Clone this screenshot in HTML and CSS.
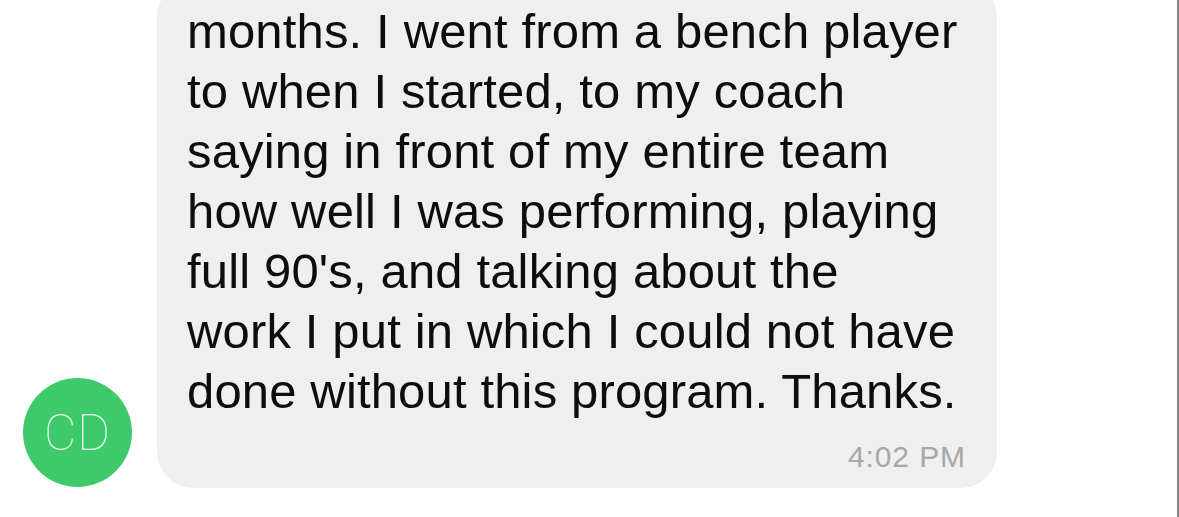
FILE: index.html
```html
<!DOCTYPE html>
<html>
<head>
<meta charset="utf-8">
<link rel="stylesheet" href="styles.css">
</head>
<body>
<div class="thread">
  <div class="row">
    <div class="avatar">CD</div>
    <div class="bubble">
      <p class="text">months. I went from a bench player<br>to when I started, to my coach<br>saying in front of my entire team<br>how well I was performing, playing<br>full 90's, and talking about the<br>work I put in which I could not have<br>done without this program. Thanks.</p>
      <div class="time">4:02 PM</div>
    </div>
  </div>
</div>
</body>
</html>
```
FILE: styles.css
```css
html, body {
  margin: 0;
  padding: 0;
  background: #ffffff;
}
.thread {
  box-sizing: border-box;
  width: 1179px;
  height: 517px;
  overflow: hidden;
  border-right: 2px solid #858585;
  display: flex;
  flex-direction: column;
  justify-content: flex-end;
  padding: 0 0 29px 23px;
}
.row {
  display: flex;
  align-items: flex-end;
  gap: 25px;
}
.avatar {
  flex: none;
  width: 109px;
  height: 109px;
  margin-bottom: 1px;
  border-radius: 50%;
  background: #3ec96b;
  color: #e6f7ea;
  font-family: Roboto, "Liberation Sans", sans-serif;
  font-weight: 100;
  font-size: 50px;
  letter-spacing: 1px;
  display: flex;
  align-items: center;
  justify-content: center;
}
.bubble {
  box-sizing: border-box;
  width: 840px;
  background: #efefef;
  border-radius: 36px;
  padding: 20px 31px 15px 30px;
}
.text {
  margin: 0;
  font-family: "Liberation Sans", Arial, sans-serif;
  font-size: 49px;
  letter-spacing: 0.15px;
  line-height: 60px;
  color: #0d0d0d;
  white-space: nowrap;
}
.time {
  margin-top: 20px;
  text-align: right;
  font-family: "Liberation Sans", Arial, sans-serif;
  font-size: 30px;
  letter-spacing: 0.9px;
  line-height: 32px;
  color: #a8a8a8;
}
```
